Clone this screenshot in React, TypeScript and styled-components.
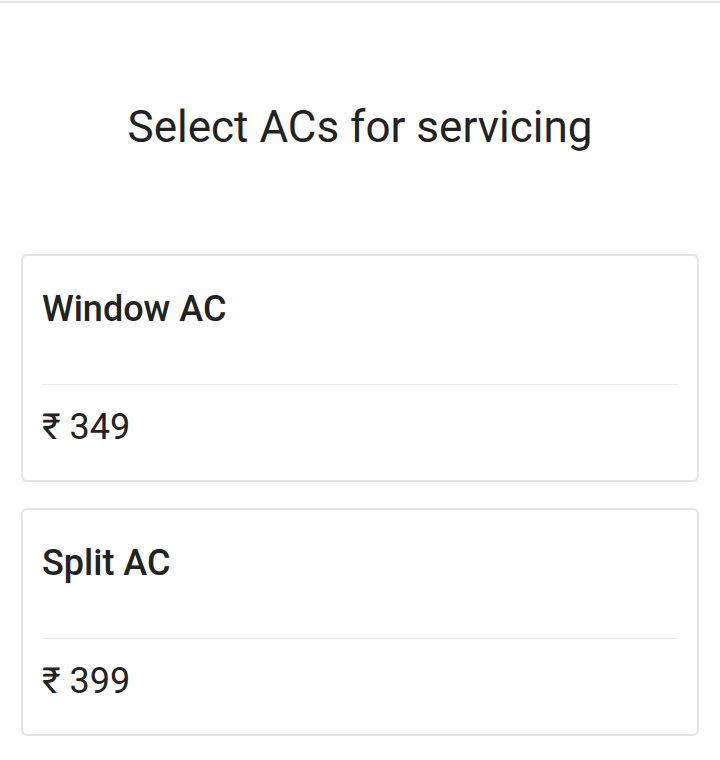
import React from "react";
import styled, { createGlobalStyle } from "styled-components";

const Global = createGlobalStyle`
  html, body { margin: 0; padding: 0; background: #ffffff; }
  body { font-family: Roboto, "Noto Sans", "Liberation Sans", sans-serif; color: #212121; }
`;

const Page = styled.div`
  display: flex;
  flex-direction: column;
  padding: 0 21px 24px;
`;

const TopRule = styled.div`
  margin: 1px -21px 0;
  height: 2px;
  background: #e6e6e6;
`;

const Title = styled.h1`
  margin: 99px 0 0;
  font-size: 44px;
  line-height: 50px;
  font-weight: 400;
  text-align: center;
  color: #222222;
`;

const List = styled.div`
  display: flex;
  flex-direction: column;
  gap: 26px;
  margin-top: 102px;
`;

const Card = styled.div`
  border: 2px solid #e4e4e4;
  border-radius: 6px;
  padding: 31px 19px;
  display: flex;
  flex-direction: column;
  background: #ffffff;
`;

const Name = styled.div`
  font-size: 36px;
  line-height: 44px;
  font-weight: 500;
  color: #222222;
`;

const Divider = styled.div`
  height: 1px;
  background: #e8e8e8;
  margin: 53px 0 20px;
`;

const Price = styled.div`
  font-size: 36px;
  line-height: 44px;
  font-weight: 400;
  color: #222222;
`;

const items = [
  { name: "Window AC", price: 349 },
  { name: "Split AC", price: 399 },
];

export default function App() {
  return (
    <>
      <Global />
      <Page>
        <TopRule />
        <Title>Select ACs for servicing</Title>
        <List>
          {items.map((it) => (
            <Card key={it.name}>
              <Name>{it.name}</Name>
              <Divider />
              <Price>₹ {it.price}</Price>
            </Card>
          ))}
        </List>
      </Page>
    </>
  );
}
